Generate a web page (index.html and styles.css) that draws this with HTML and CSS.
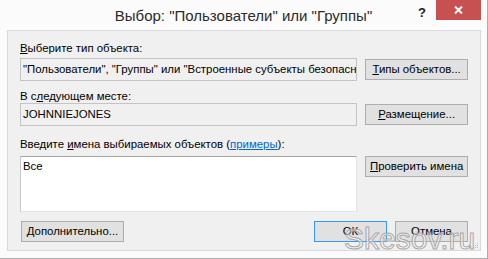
FILE: index.html
```html
<!DOCTYPE html>
<html lang="ru">
<head>
<meta charset="utf-8">
<title>Выбор: "Пользователи" или "Группы"</title>
<link rel="stylesheet" href="styles.css">
</head>
<body>
<div class="window">
  <div class="titlebar">
    <div></div>
    <div class="title">Выбор: "Пользователи" или "Группы"</div>
    <div class="controls">
      <span class="help">?</span>
      <span class="close">
        <svg width="9" height="8" viewBox="0 0 9 8"><path d="M1 0.5 L8 7.5 M8 0.5 L1 7.5" stroke="#ffffff" stroke-width="2"/></svg>
      </span>
    </div>
  </div>
  <div class="client">
    <div class="label first"><u>В</u>ыберите тип объекта:</div>
    <div class="row">
      <div class="field readonly">"Пользователи", "Группы" или "Встроенные субъекты безопасности"</div>
      <div class="btn"><u>Т</u>ипы объектов...</div>
    </div>
    <div class="label second">В с<u>л</u>едующем месте:</div>
    <div class="row">
      <div class="field readonly">JOHNNIEJONES</div>
      <div class="btn"><u>Р</u>азмещение...</div>
    </div>
    <div class="label third">Введите <u>и</u>мена выбираемых объектов (<a href="#">примеры</a>):</div>
    <div class="row top">
      <div class="field area">Все</div>
      <div class="btn"><u>П</u>роверить имена</div>
    </div>
    <div class="footer">
      <div class="btn wide"><u>Д</u>ополнительно...</div>
      <div class="actions">
        <div class="btn default">ОК</div>
        <div class="btn">Отмена</div>
      </div>
    </div>
    <svg class="grip" width="7" height="7" viewBox="0 0 7 7">
      <rect x="5" y="1" width="1" height="1" fill="#b8b8b8"/>
      <rect x="3" y="3" width="1" height="1" fill="#b8b8b8"/>
      <rect x="5" y="3" width="1" height="1" fill="#b8b8b8"/>
      <rect x="1" y="5" width="1" height="1" fill="#b8b8b8"/>
      <rect x="3" y="5" width="1" height="1" fill="#b8b8b8"/>
      <rect x="5" y="5" width="1" height="1" fill="#b8b8b8"/>
    </svg>
  </div>
  <div class="watermark">Skesov.ru</div>
</div>
</body>
</html>
```

FILE: styles.css
```css
body {
  margin: 0;
  background-color: #ffffff;
  font-family: "Liberation Sans", Arial, sans-serif;
  font-size: 11.4px;
  color: #000000;
}
.window {
  position: relative;
  width: 487px;
  height: 258px;
  background-color: #fbfbfb;
  border-right: 1px solid #acacac;
  border-bottom: 1px solid #acacac;
}
.titlebar {
  display: grid;
  grid-template-columns: 1fr auto 1fr;
  height: 30px;
}
.title {
  font-size: 15px;
  line-height: 30px;
  color: #2b2b2b;
  padding-top: 1px;
}
.controls {
  display: flex;
  justify-content: flex-end;
  align-items: flex-start;
  padding-right: 6px;
}
.help {
  font-size: 13px;
  font-weight: bold;
  color: #222222;
  margin-top: 5px;
  margin-right: 10px;
}
.close {
  display: flex;
  align-items: center;
  justify-content: center;
  width: 45px;
  height: 20px;
  background-color: #c75050;
}
.client {
  position: relative;
  margin: 0 6px 0 7px;
  padding: 10px 12px 0 12px;
  box-sizing: border-box;
  height: 221px;
  background-color: #f0f0f0;
  border: 1px solid #dadada;
}
.label {
  line-height: 14px;
  height: 14px;
}
.label.first {
  margin-bottom: 3px;
}
.label.second {
  margin-top: 8px;
}
.label.third {
  margin-top: 11px;
  margin-bottom: 5px;
}
.label a {
  color: #0066cc;
}
.row {
  display: flex;
  align-items: center;
  gap: 8px;
}
.row.top {
  align-items: flex-start;
}
.field {
  width: 338px;
  height: 23px;
  box-sizing: border-box;
  padding: 4px 2px 0 2px;
  white-space: nowrap;
  overflow: hidden;
  border: 1px solid #c4c4c4;
}
.field.readonly {
  background-color: #f0f0f0;
}
.field.area {
  height: 56px;
  padding-top: 3px;
  background-color: #ffffff;
  border-color: #e3e3e3;
  border-top-color: #a5a5a5;
  border-left-color: #c8c8c8;
}
.btn {
  width: 103px;
  height: 21px;
  box-sizing: border-box;
  line-height: 19px;
  text-align: center;
  white-space: nowrap;
  background-color: #e1e1e1;
  border: 1px solid #adadad;
}
.footer {
  display: flex;
  justify-content: space-between;
  margin-top: 9px;
  padding-left: 1px;
}
.actions {
  display: flex;
  gap: 8px;
}
.actions .btn {
  width: 73px;
}
.btn.default {
  border-color: #3399ff;
}
.grip {
  position: absolute;
  right: 1px;
  bottom: 1px;
}
.watermark {
  position: absolute;
  left: 344px;
  top: 224px;
  font-size: 30px;
  line-height: 30px;
  color: rgba(255, 255, 255, 0.45);
  -webkit-text-stroke: 1px #a9a9a9;
  pointer-events: none;
}
```
